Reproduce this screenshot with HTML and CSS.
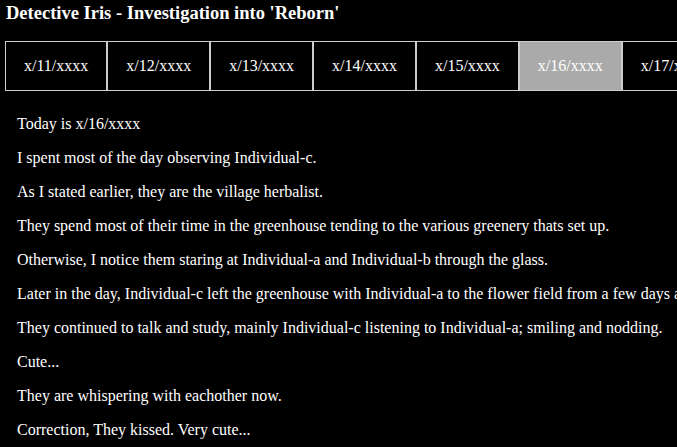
FILE: index.html
```html
<!DOCTYPE html>
<html lang="en">

<head>
    <meta charset="UTF-8">
    <meta name="viewport" content="width=device-width, initial-scale=1.0">
    <link rel="stylesheet" href="styles.css">
    <title>Detective Iris</title>
</head>

<body>
    <h1 class="title">Detective Iris - Investigation into 'Reborn'</h1>
    <div class="tabs">
        <button class="tab">x/11/xxxx</button>
        <button class="tab">x/12/xxxx</button>
        <button class="tab">x/13/xxxx</button>
        <button class="tab">x/14/xxxx</button>
        <button class="tab">x/15/xxxx</button>
        <button class="tab active">x/16/xxxx</button>
        <button class="tab">x/17/xxxx</button>
        <button class="tab">x/18/xxxx</button>
    </div>
    <div class="entry">
        <p>Today is x/16/xxxx</p>
        <p>I spent most of the day observing Individual-c.</p>
        <p>As I stated earlier, they are the village herbalist.</p>
        <p>They spend most of their time in the greenhouse tending to the various greenery thats set up.</p>
        <p>Otherwise, I notice them staring at Individual-a and Individual-b through the glass.</p>
        <p>Later in the day, Individual-c left the greenhouse with Individual-a to the flower field from a few days ago.</p>
        <p>They continued to talk and study, mainly Individual-c listening to Individual-a; smiling and nodding.</p>
        <p>Cute...</p>
        <p>They are whispering with eachother now.</p>
        <p>Correction, They kissed. Very cute...</p>
    </div>
</body>

</html>
```

FILE: styles.css
```css
* {
    box-sizing: border-box;
}

body {
    margin: 0;
    padding: 1px 0 0 5px;
    background-color: black;
    color: white;
    font-family: "Liberation Serif", "Times New Roman", serif;
    font-size: 16px;
    overflow: hidden;
}

.title {
    font-size: 18.5px;
    margin: 0;
    padding: 2px 1px;
}

.tabs {
    display: flex;
    margin-top: 15px;
    overflow: hidden;
}

.tab {
    flex-shrink: 0;
    background-color: black;
    color: white;
    border: 1px solid #ccc;
    font-family: inherit;
    font-size: 16px;
    padding: 15px 18px;
    margin: 0;
    cursor: pointer;
}

.tab.active {
    background-color: #aaa;
}

.entry {
    padding: 8px 12px;
    white-space: nowrap;
}

.entry p {
    margin: 16px 0;
}
```
